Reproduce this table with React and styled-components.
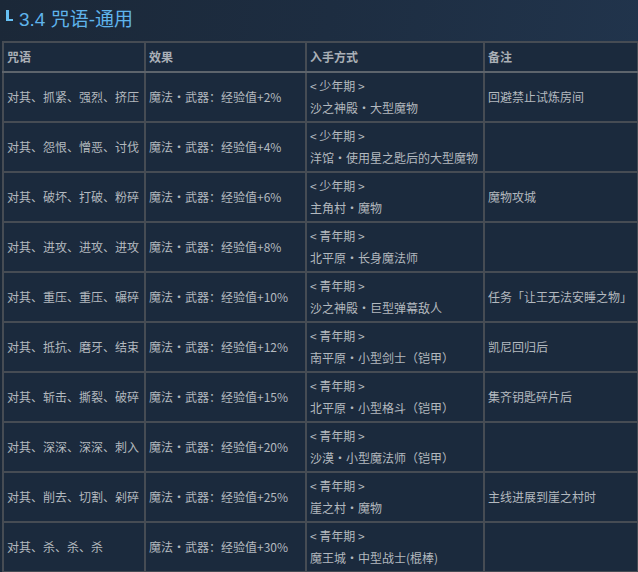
import React from "react";
import styled, { createGlobalStyle } from "styled-components";

const Global = createGlobalStyle`
  html, body { margin: 0; padding: 0; }
  body {
    width: 638px;
    height: 572px;
    overflow: hidden;
    background: linear-gradient(100deg, #1b2838 0%, #1d2d41 45%, #22364f 100%);
    font-family: "Noto Sans CJK SC", "Noto Sans", Arial, sans-serif;
  }
`;

const Page = styled.div`
  padding: 7px 1px 0 2px;
`;

const Title = styled.h2`
  margin: 0 0 0 4px;
  height: 34px;
  display: flex;
  align-items: flex-start;
  gap: 6px;
  font-size: 19px;
  font-weight: 400;
  line-height: 25px;
  color: #5fb4ec;
  font-family: "Liberation Sans", "Noto Sans CJK SC", sans-serif;
`;

const Corner = styled.span`
  display: block;
  width: 4px;
  height: 9px;
  margin-top: 3px;
  border-left: 3px solid #66c0f4;
  border-bottom: 2px solid #66c0f4;
`;

const Table = styled.table`
  border-collapse: collapse;
  table-layout: fixed;
  width: 635px;
  background: #1b2a3d;
  color: #b3b9bf;
  font-size: 12px;
`;

const Col = styled.col`
  width: ${(p) => p.$w}px;
`;

const Th = styled.th`
  height: 28px;
  padding: 0 3px;
  text-align: left;
  font-weight: 700;
  color: #a9afb6;
  border: 2px solid #464c54;
  border-bottom-color: #5d646c;
  line-height: 18px;
`;

const Td = styled.td`
  height: 48px;
  padding: 0 3px;
  border: 2px solid #464c54;
  vertical-align: middle;
  line-height: 22px;
  white-space: nowrap;
  overflow: hidden;
`;

const Line = styled.div``;

const rows = [
  ["对其、抓紧、强烈、挤压", "魔法・武器：经验值+2%", "< 少年期 >", "沙之神殿・大型魔物", "回避禁止试炼房间"],
  ["对其、怨恨、憎恶、讨伐", "魔法・武器：经验值+4%", "< 少年期 >", "洋馆・使用星之匙后的大型魔物", ""],
  ["对其、破坏、打破、粉碎", "魔法・武器：经验值+6%", "< 少年期 >", "主角村・魔物", "魔物攻城"],
  ["对其、进攻、进攻、进攻", "魔法・武器：经验值+8%", "< 青年期 >", "北平原・长身魔法师", ""],
  ["对其、重压、重压、碾碎", "魔法・武器：经验值+10%", "< 青年期 >", "沙之神殿・巨型弹幕敌人", "任务「让王无法安睡之物」"],
  ["对其、抵抗、磨牙、结束", "魔法・武器：经验值+12%", "< 青年期 >", "南平原・小型剑士（铠甲）", "凯尼回归后"],
  ["对其、斩击、撕裂、破碎", "魔法・武器：经验值+15%", "< 青年期 >", "北平原・小型格斗（铠甲）", "集齐钥匙碎片后"],
  ["对其、深深、深深、刺入", "魔法・武器：经验值+20%", "< 青年期 >", "沙漠・小型魔法师（铠甲）", ""],
  ["对其、削去、切割、剁碎", "魔法・武器：经验值+25%", "< 青年期 >", "崖之村・魔物", "主线进展到崖之村时"],
  ["对其、杀、杀、杀", "魔法・武器：经验值+30%", "< 青年期 >", "魔王城・中型战士(棍棒)", ""],
];

export default function App() {
  return (
    <>
      <Global />
      <Page>
        <Title>
          <Corner />
          3.4 咒语-通用
        </Title>
        <Table>
          <colgroup>
            <Col $w={142} />
            <Col $w={161} />
            <Col $w={178} />
            <Col $w={154} />
          </colgroup>
          <thead>
            <tr>
              <Th>咒语</Th>
              <Th>效果</Th>
              <Th>入手方式</Th>
              <Th>备注</Th>
            </tr>
          </thead>
          <tbody>
            {rows.map((r, i) => (
              <tr key={i}>
                <Td>{r[0]}</Td>
                <Td>{r[1]}</Td>
                <Td>
                  <Line>{r[2]}</Line>
                  <Line>{r[3]}</Line>
                </Td>
                <Td>{r[4]}</Td>
              </tr>
            ))}
          </tbody>
        </Table>
      </Page>
    </>
  );
}
